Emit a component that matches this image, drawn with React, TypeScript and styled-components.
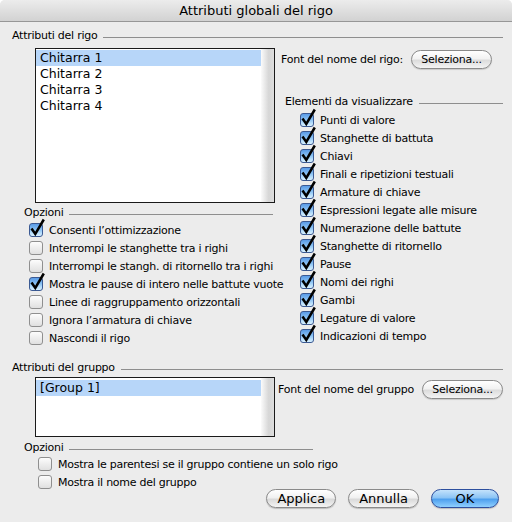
import styled, { createGlobalStyle } from 'styled-components'

const GlobalStyle = createGlobalStyle`
  html, body {
    margin: 0;
    padding: 0;
    background: #ffffff;
  }
  body {
    font-family: "DejaVu Sans", "Liberation Sans", sans-serif;
  }
`

const Window = styled.div`
  width: 512px;
  height: 522px;
  box-sizing: border-box;
  background: #ececec;
  border-radius: 5px 5px 0 0;
  overflow: hidden;
  display: flex;
  flex-direction: column;
  font-size: 11px;
  color: #000;
`
const TitleBar = styled.div`
  height: 22px;
  flex: none;
  box-sizing: border-box;
  border-bottom: 1px solid #979797;
  background: linear-gradient(#ececec, #d2d2d2);
  display: flex;
  align-items: center;
  justify-content: center;
  font-size: 13px;
`
const Body = styled.div`
  padding: 7px 9px 0 12px;
  display: flex;
  flex-direction: column;
  letter-spacing: -0.25px;
`
const Header = styled.div<{ $indent?: number; $lineEnd?: number; $top?: number }>`
  display: flex;
  align-items: center;
  gap: 6px;
  height: 14px;
  line-height: 14px;
  white-space: nowrap;
  margin-top: ${p => p.$top ?? 0}px;
  margin-left: ${p => p.$indent ?? 0}px;
  margin-right: ${p => p.$lineEnd ?? 0}px;
  &::after {
    content: '';
    flex: 1;
    height: 1px;
    margin-top: 2px;
    background: #8e8e8e;
  }
`
const Split = styled.div<{ $left: number; $top: number }>`
  display: grid;
  grid-template-columns: ${p => p.$left}px 1fr;
  margin-top: ${p => p.$top}px;
`
const Column = styled.div`
  display: flex;
  flex-direction: column;
`
const ListBox = styled.div<{ $height: number }>`
  margin-left: 23px;
  width: 240px;
  height: ${p => p.$height}px;
  box-sizing: border-box;
  border: 1px solid #1a1a1a;
  background: #fff;
  display: flex;
`
const ListItems = styled.div<{ $pad: number }>`
  flex: 1;
  padding-top: ${p => p.$pad}px;
  font-size: 12.5px;
  letter-spacing: 0;
`
const ListRow = styled.div<{ $selected?: boolean }>`
  height: 16px;
  line-height: 16px;
  padding-left: 4px;
  background: ${p => (p.$selected ? '#b7d6f9' : 'transparent')};
`
const Track = styled.div`
  width: 13px;
  background: linear-gradient(to right, #fbfbfb, #d6d6d6 60%, #dedede);
`
const FontRow = styled.div<{ $top: number; $right: number }>`
  display: flex;
  align-items: center;
  height: 19px;
  margin-top: ${p => p.$top}px;
  margin-right: ${p => p.$right}px;
  white-space: nowrap;
`
const SmallButton = styled.button`
  margin-left: auto;
  width: 81px;
  height: 19px;
  padding: 0;
  border: 1px solid #8a8a8a;
  border-radius: 10px;
  background: linear-gradient(#ffffff 0%, #f2f2f2 45%, #dcdcdc 55%, #f4f4f4 100%);
  box-shadow: 0 1px 1px rgba(0, 0, 0, 0.15);
  font-family: inherit;
  font-size: 11px;
  letter-spacing: -0.25px;
  color: #000;
`
const CheckList = styled.div<{ $indent: number; $top: number }>`
  display: flex;
  flex-direction: column;
  margin-left: ${p => p.$indent}px;
  margin-top: ${p => p.$top}px;
`
const CheckRow = styled.div`
  display: flex;
  align-items: center;
  gap: 6px;
  height: 18px;
  white-space: nowrap;
`
const Box = styled.span<{ $on: boolean }>`
  position: relative;
  flex: none;
  width: 14px;
  height: 14px;
  box-sizing: border-box;
  border-radius: 3px;
  border: 1px solid ${p => (p.$on ? '#3b5a93' : '#8f8f8f')};
  background: ${p =>
    p.$on
      ? 'linear-gradient(#5a9be6 0%, #86bff3 45%, #b6defc 75%, #d8f0ff 100%)'
      : 'linear-gradient(#fdfdfd 0%, #eeeeee 50%, #e0e0e0 100%)'};
  svg {
    position: absolute;
    left: -2px;
    top: -6px;
  }
`
const ButtonRow = styled.div`
  display: flex;
  justify-content: flex-end;
  gap: 12px;
  margin-top: -2px;
  margin-right: 4px;
  letter-spacing: 0;
`
const PushButton = styled.button<{ $primary?: boolean }>`
  min-width: 68px;
  height: 19px;
  padding: 0 10px;
  border-radius: 10px;
  border: 1px solid ${p => (p.$primary ? '#2d4f9e' : '#8a8a8a')};
  background: ${p =>
    p.$primary
      ? 'linear-gradient(#c4e2fb 0%, #8cc4f5 45%, #4fa0ee 55%, #8fd0ff 100%)'
      : 'linear-gradient(#ffffff 0%, #f1f1f1 45%, #dadada 55%, #f4f4f4 100%)'};
  box-shadow: 0 1px 1px rgba(0, 0, 0, 0.2);
  font-family: inherit;
  font-size: 13px;
  line-height: 17px;
  color: #000;
`

const Check = ({ on, label }: { on: boolean; label: string }) => (
  <CheckRow>
    <Box $on={on}>
      {on && (
        <svg width="18" height="19" viewBox="0 0 18 19">
          <path d="M3.5 10.5 L7.3 16 L15.8 1.5" fill="none" stroke="#000" strokeWidth="2.5" strokeLinejoin="miter" />
        </svg>
      )}
    </Box>
    {label}
  </CheckRow>
)

const rigoOptions: [string, boolean][] = [
  ['Consenti l’ottimizzazione', true],
  ['Interrompi le stanghette tra i righi', false],
  ['Interrompi le stangh. di ritornello tra i righi', false],
  ['Mostra le pause di intero nelle battute vuote', true],
  ['Linee di raggruppamento orizzontali', false],
  ['Ignora l’armatura di chiave', false],
  ['Nascondi il rigo', false],
]

const elements = [
  'Punti di valore',
  'Stanghette di battuta',
  'Chiavi',
  'Finali e ripetizioni testuali',
  'Armature di chiave',
  'Espressioni legate alle misure',
  'Numerazione delle battute',
  'Stanghette di ritornello',
  'Pause',
  'Nomi dei righi',
  'Gambi',
  'Legature di valore',
  'Indicazioni di tempo',
]

export default function App() {
  return (
    <>
      <GlobalStyle />
      <Window>
        <TitleBar>Attributi globali del rigo</TitleBar>
        <Body>
          <Header>Attributi del rigo</Header>
          <Split $left={269} $top={5}>
            <Column>
              <ListBox $height={155}>
                <ListItems $pad={1}>
                  <ListRow $selected>Chitarra 1</ListRow>
                  <ListRow>Chitarra 2</ListRow>
                  <ListRow>Chitarra 3</ListRow>
                  <ListRow>Chitarra 4</ListRow>
                </ListItems>
                <Track />
              </ListBox>
              <Header $top={3} $indent={12} $lineEnd={8}>Opzioni</Header>
              <CheckList $indent={17} $top={1}>
                {rigoOptions.map(([label, on]) => (
                  <Check key={label} label={label} on={on} />
                ))}
              </CheckList>
            </Column>
            <Column>
              <FontRow $top={2} $right={11}>
                Font del nome del rigo:
                <SmallButton>Seleziona...</SmallButton>
              </FontRow>
              <Header $top={26} $indent={4}>Elementi da visualizzare</Header>
              <CheckList $indent={19} $top={2}>
                {elements.map(label => (
                  <Check key={label} label={label} on />
                ))}
              </CheckList>
            </Column>
          </Split>

          <Header $top={14}>Attributi del gruppo</Header>
          <Split $left={266} $top={2}>
            <Column>
              <ListBox $height={60}>
                <ListItems $pad={2}>
                  <ListRow $selected>[Group 1]</ListRow>
                </ListItems>
                <Track />
              </ListBox>
            </Column>
            <Column>
              <FontRow $top={3} $right={0}>
                Font del nome del gruppo
                <SmallButton>Seleziona...</SmallButton>
              </FontRow>
            </Column>
          </Split>
          <Header $top={4} $indent={12} $lineEnd={190}>Opzioni</Header>
          <CheckList $indent={26} $top={0}>
            <Check label="Mostra le parentesi se il gruppo contiene un solo rigo" on={false} />
            <Check label="Mostra il nome del gruppo" on={false} />
          </CheckList>
          <ButtonRow>
            <PushButton>Applica</PushButton>
            <PushButton>Annulla</PushButton>
            <PushButton $primary>OK</PushButton>
          </ButtonRow>
        </Body>
      </Window>
    </>
  )
}
